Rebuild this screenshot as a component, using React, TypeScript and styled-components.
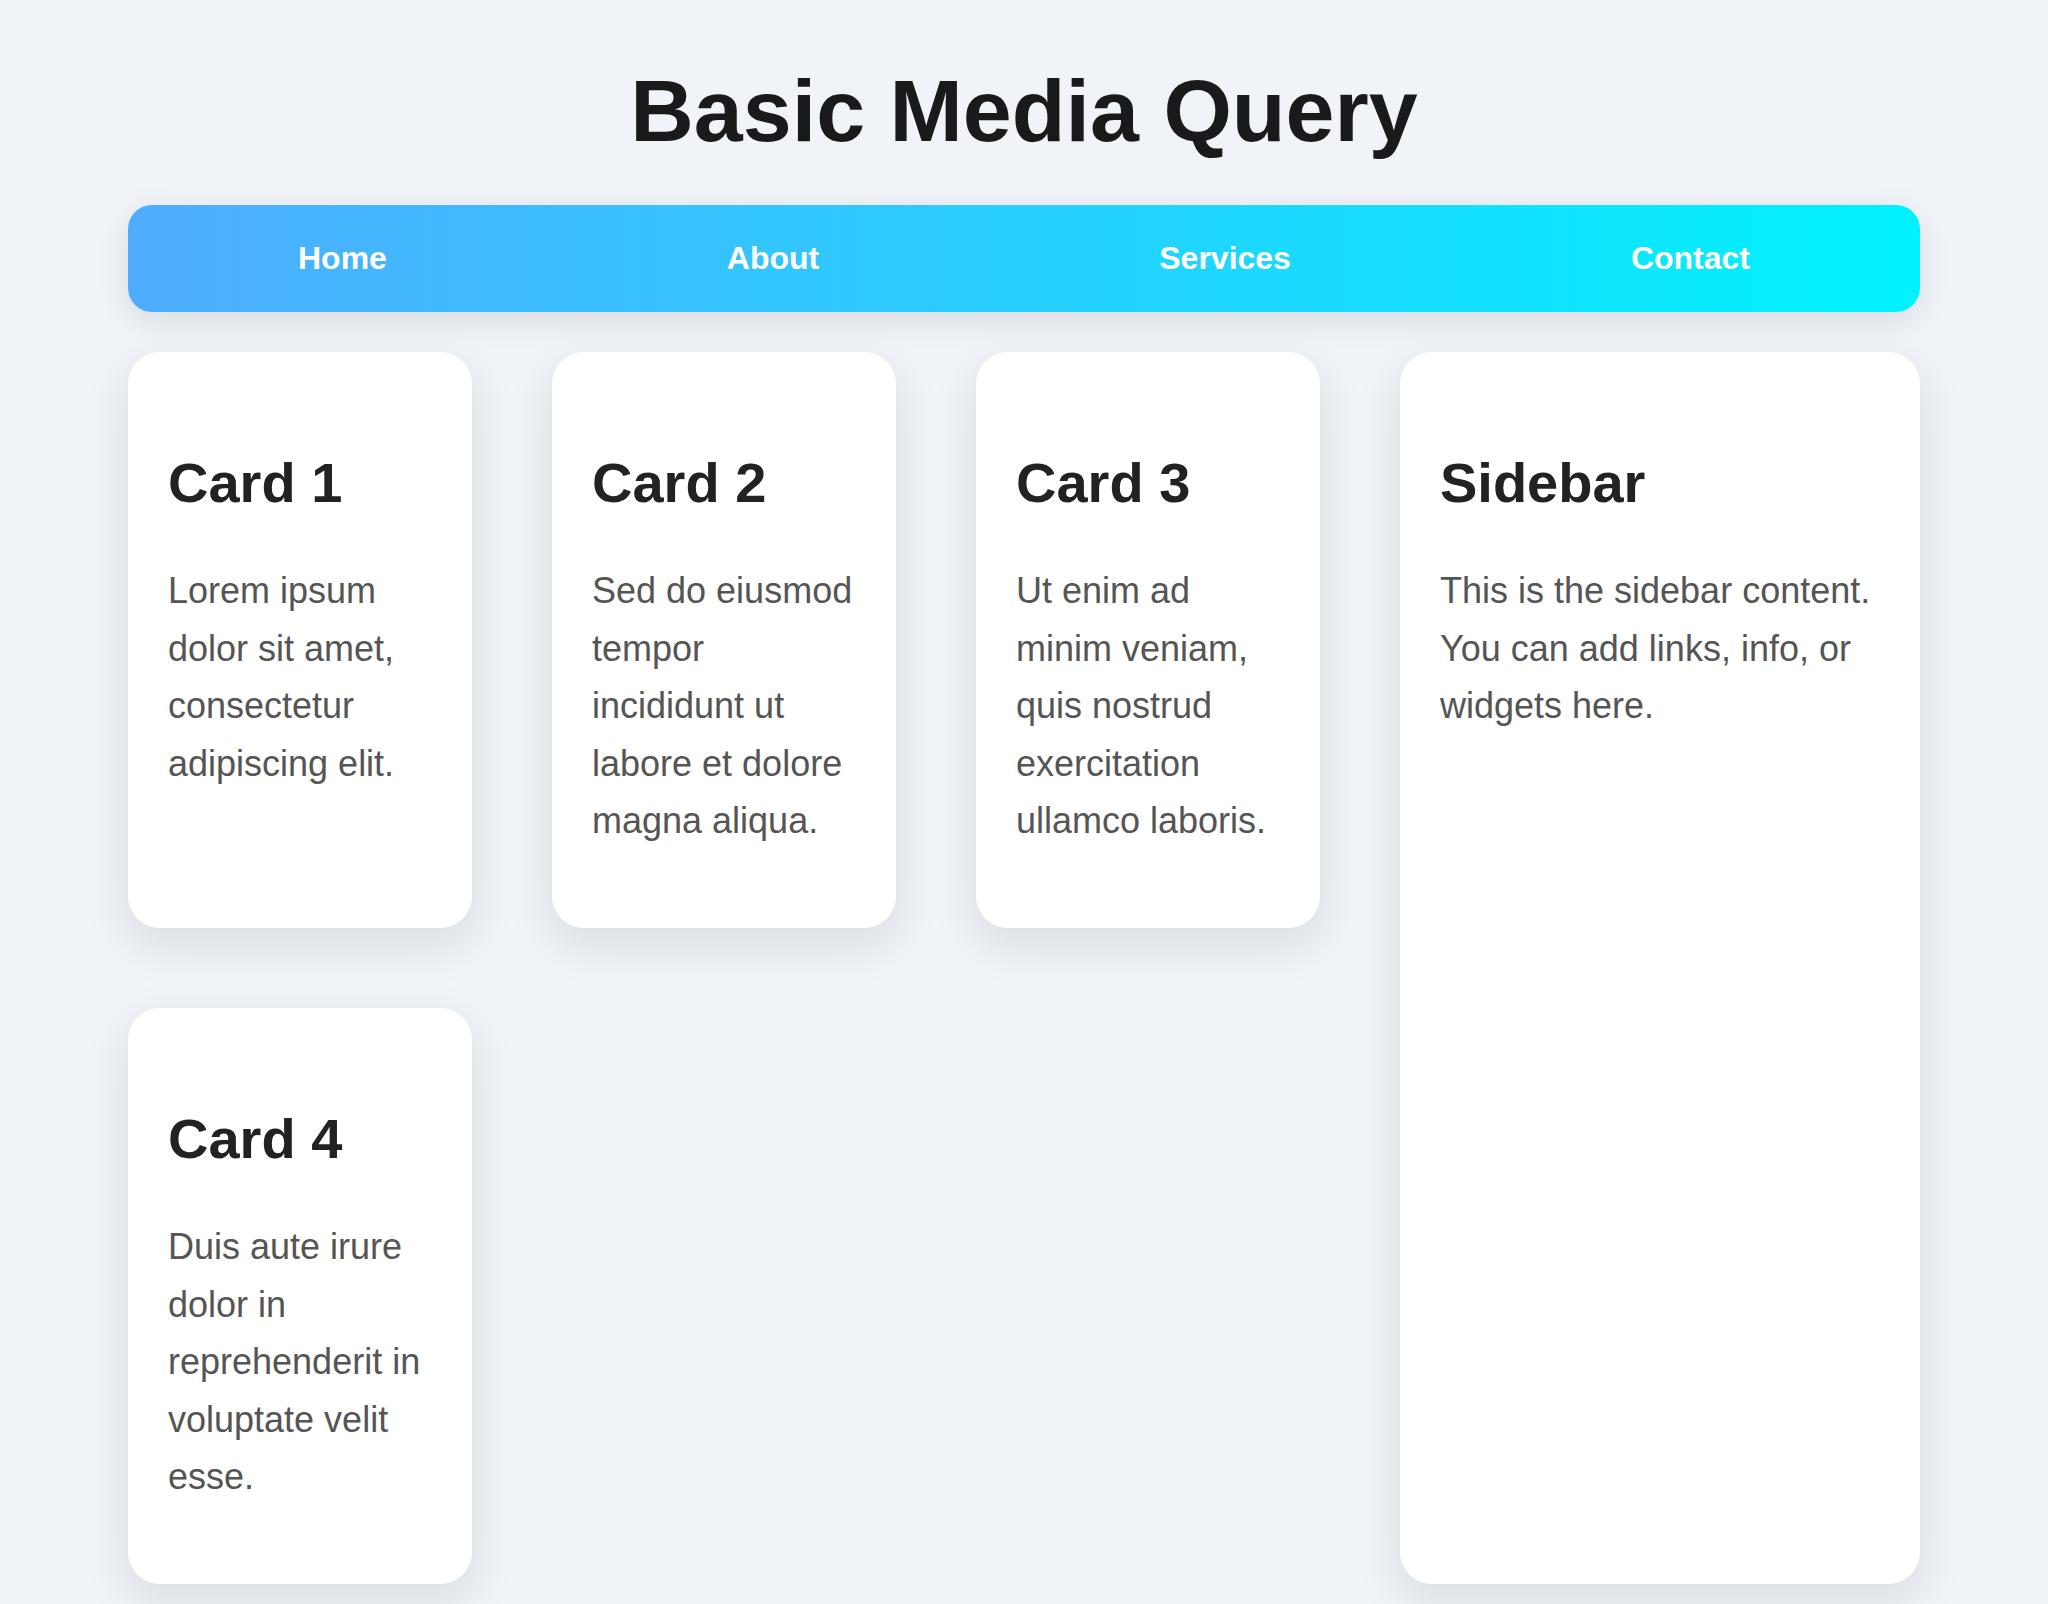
import React from "react";
import styled, { createGlobalStyle } from "styled-components";

const GlobalStyle = createGlobalStyle`
  body {
    margin: 0;
    background: #f0f4f8;
    color: #222;
    font-family: Arial, "Liberation Sans", sans-serif;
  }
`;

const Page = styled.div`
  padding: 60px 128px 20px;
`;

const Title = styled.h1`
  margin: 0 0 43px;
  color: #1a1a1a;
  font-size: 88px;
  line-height: 102px;
  text-align: center;
`;

const Nav = styled.nav`
  display: flex;
  justify-content: space-around;
  margin-bottom: 40px;
  padding: 34px 0;
  border-radius: 24px;
  background: linear-gradient(90deg, #4facfe, #00f2fe);
  box-shadow: 0 8px 32px rgba(0, 0, 0, 0.1);
`;

const NavLink = styled.a`
  color: #fff;
  font-size: 32px;
  font-weight: 700;
  line-height: 39px;
  text-decoration: none;
`;

const Layout = styled.div`
  display: grid;
  grid-template-columns: minmax(0, 1192fr) minmax(0, 520fr);
  gap: 80px;
`;

const Cards = styled.main`
  display: grid;
  grid-template-columns: repeat(3, minmax(0, 1fr));
  gap: 80px;
`;

const Panel = styled.section`
  padding: 40px;
  border-radius: 32px;
  background: #fff;
  box-shadow: 0 16px 48px rgba(0, 0, 0, 0.1);
`;

const Heading = styled.h2`
  margin: 56px 0 44px;
  font-size: 56px;
  line-height: 70px;
`;

const Text = styled.p`
  margin: 0 0 38px;
  color: #555;
  font-size: 36px;
  line-height: 1.6;
`;

const links = ["Home", "About", "Services", "Contact"];

const cards = [
  { title: "Card 1", text: "Lorem ipsum dolor sit amet, consectetur adipiscing elit." },
  { title: "Card 2", text: "Sed do eiusmod tempor incididunt ut labore et dolore magna aliqua." },
  { title: "Card 3", text: "Ut enim ad minim veniam, quis nostrud exercitation ullamco laboris." },
  { title: "Card 4", text: "Duis aute irure dolor in reprehenderit in voluptate velit esse." },
];

export default function App() {
  return (
    <Page>
      <GlobalStyle />
      <Title>Basic Media Query</Title>
      <Nav>
        {links.map((label) => (
          <NavLink key={label} href="#">{label}</NavLink>
        ))}
      </Nav>
      <Layout>
        <Cards>
          {cards.map((card) => (
            <Panel key={card.title}>
              <Heading>{card.title}</Heading>
              <Text>{card.text}</Text>
            </Panel>
          ))}
        </Cards>
        <Panel as="aside">
          <Heading>Sidebar</Heading>
          <Text>This is the sidebar content. You can add links, info, or widgets here.</Text>
        </Panel>
      </Layout>
    </Page>
  );
}
